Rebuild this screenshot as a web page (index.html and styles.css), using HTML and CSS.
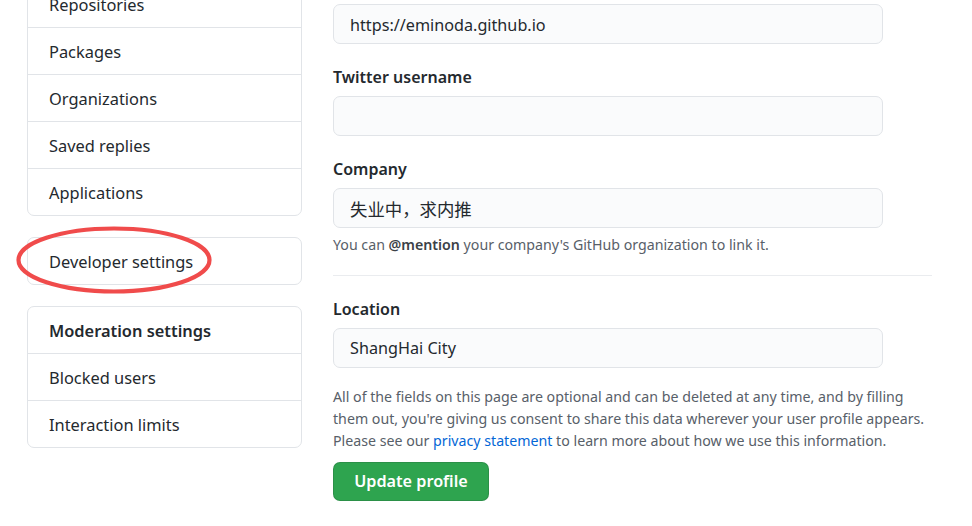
FILE: index.html
```html
<!DOCTYPE html>
<html lang="en">
<head>
<meta charset="utf-8">
<title>Profile settings</title>
<link rel="stylesheet" href="styles.css">
</head>
<body>
<div class="layout">
  <aside class="sidebar">
    <nav class="menu menu-first">
      <a class="menu-item">Repositories</a>
      <a class="menu-item">Packages</a>
      <a class="menu-item">Organizations</a>
      <a class="menu-item">Saved replies</a>
      <a class="menu-item">Applications</a>
    </nav>
    <nav class="menu">
      <a class="menu-item">Developer settings</a>
    </nav>
    <nav class="menu">
      <div class="menu-item menu-heading">Moderation settings</div>
      <a class="menu-item">Blocked users</a>
      <a class="menu-item">Interaction limits</a>
    </nav>
    <svg class="annotation" width="204" height="76" viewBox="0 0 204 76" aria-hidden="true">
      <ellipse cx="102" cy="38" rx="95.5" ry="31.5" fill="none" stroke="#f04b4b" stroke-width="4.2"/>
    </svg>
  </aside>
  <main class="main">
    <div class="field field-first">
      <div class="input">https://eminoda.github.io</div>
    </div>
    <div class="field">
      <div class="label">Twitter username</div>
      <div class="input"></div>
    </div>
    <div class="field">
      <div class="label">Company</div>
      <div class="input cjk">失业中，求内推</div>
      <p class="note">You can <strong>@mention</strong> your company's GitHub organization to link it.</p>
    </div>
    <hr class="divider">
    <div class="field">
      <div class="label">Location</div>
      <div class="input">ShangHai City</div>
    </div>
    <p class="info">All of the fields on this page are optional and can be deleted at any time, and by filling them out, you're giving us consent to share this data wherever your user profile appears. Please see our <a class="link">privacy statement</a> to learn more about how we use this information.</p>
    <button class="btn-primary" type="button">Update profile</button>
  </main>
</div>
</body>
</html>
```

FILE: styles.css
```css
* { box-sizing: border-box; }

html, body {
  margin: 0;
  padding: 0;
  background: #ffffff;
  overflow: hidden;
}

body {
  font-family: "Segoe UI", "Noto Sans", "Noto Sans CJK SC", sans-serif;
  color: #24292e;
  font-size: 16px;
}

.layout {
  display: flex;
  align-items: flex-start;
  padding-left: 27px;
  gap: 31px;
}

.sidebar {
  position: relative;
  width: 275px;
  flex: none;
  display: flex;
  flex-direction: column;
  gap: 21px;
  margin-top: -20px;
}

.menu {
  display: flex;
  flex-direction: column;
  border: 1px solid #e1e4e8;
  border-radius: 7px;
  background: #fff;
}

.menu-item {
  display: flex;
  align-items: center;
  height: 47px;
  padding: 0 21px;
  border-top: 1px solid #e1e4e8;
  color: #24292e;
  font-size: 16.4px;
  text-decoration: none;
}

.menu-item:first-child {
  border-top: 0;
  height: 46px;
}

.menu-heading {
  font-weight: 600;
}

.annotation {
  position: absolute;
  left: -15px;
  top: 242px;
}

.main {
  width: 599px;
  flex: none;
  padding-top: 4px;
}

.field {
  margin-top: 20px;
}

.field-first {
  margin-top: 0;
}

.label {
  font-weight: 600;
  font-size: 16px;
  line-height: 25px;
  padding-top: 1px;
  margin-bottom: 6px;
}

.input {
  width: 550px;
  height: 40px;
  border: 1px solid #e1e4e8;
  border-radius: 7px;
  background: #fafbfc;
  padding: 1px 16px 0;
  display: flex;
  align-items: center;
  font-size: 16.2px;
  color: #24292e;
}

.cjk {
  font-family: "Noto Sans CJK SC", sans-serif;
  font-size: 17.4px;
}

.note {
  margin: 6px 0 0;
  font-size: 14.2px;
  line-height: 21.6px;
  color: #586069;
}

.note strong {
  font-weight: 600;
  color: #3b4147;
}

.divider {
  margin: 19px 0 0;
  border: 0;
  border-top: 1px solid #eaecef;
  height: 0;
}

.info {
  margin: 18px 0 0;
  font-size: 14.2px;
  line-height: 22px;
  color: #586069;
}

.link {
  color: #0366d6;
  text-decoration: none;
}

.btn-primary {
  margin-top: 10px;
  display: block;
  width: 156px;
  height: 39px;
  border: 1px solid rgba(27, 31, 35, 0.15);
  border-radius: 7px;
  background: #2ea44f;
  color: #ffffff;
  font-family: inherit;
  font-weight: 600;
  font-size: 16.2px;
  padding: 0;
}
```
